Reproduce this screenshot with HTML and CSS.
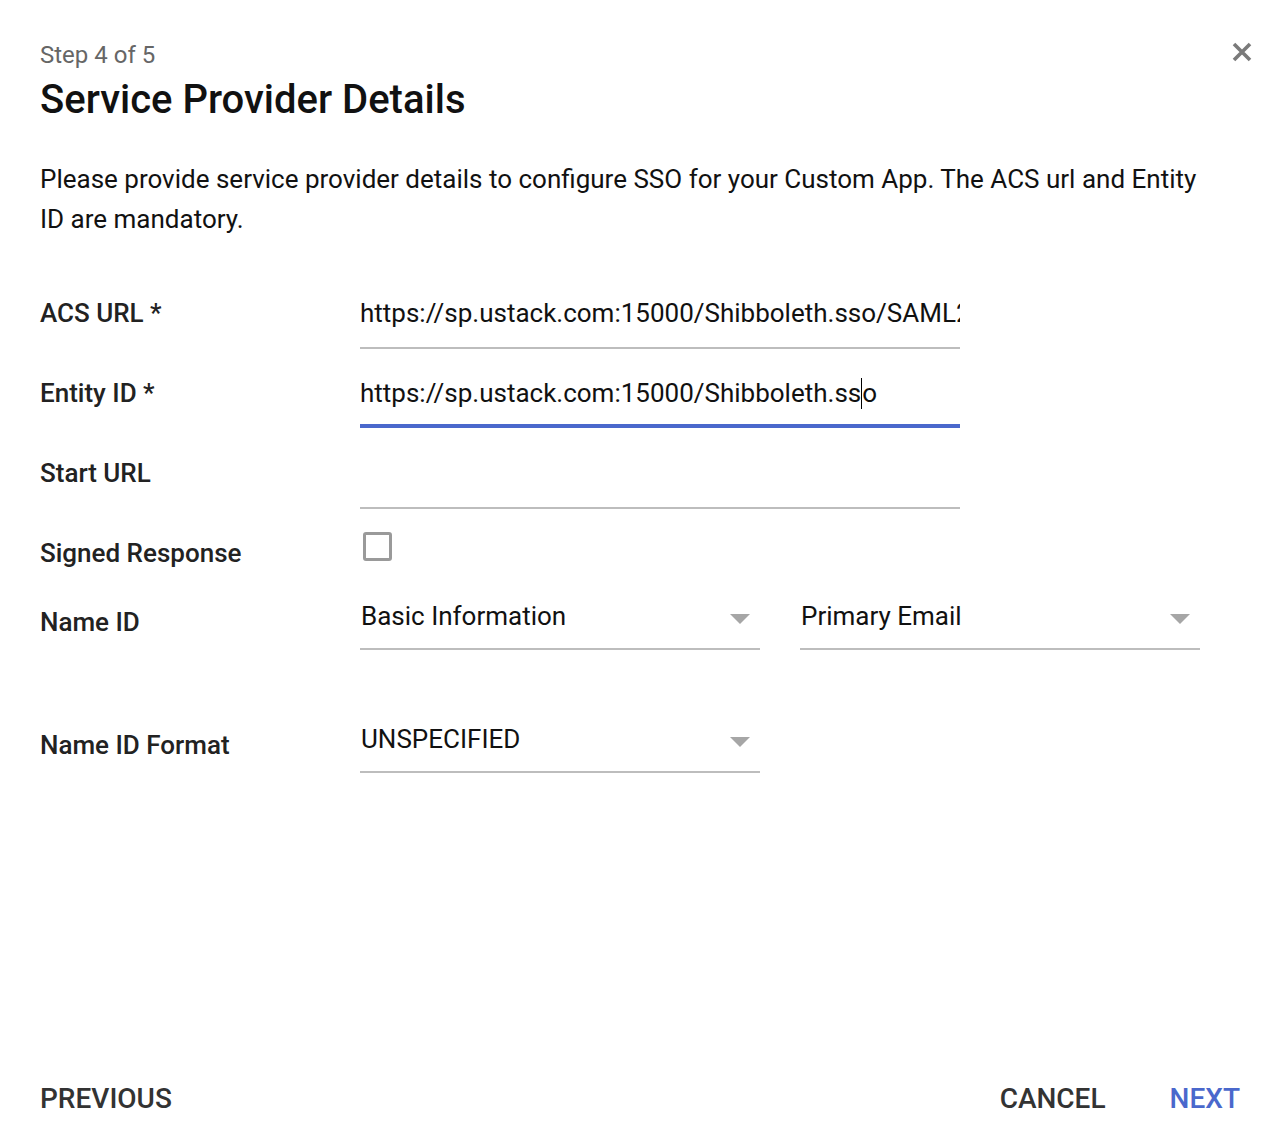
FILE: index.html
```html
<!DOCTYPE html>
<html>
<head>
<meta charset="utf-8">
<link rel="stylesheet" href="styles.css">
</head>
<body>
<div class="dialog">
  <button class="close" aria-label="Close">
    <svg width="22" height="22" viewBox="0 0 22 22"><path d="M3 3 L19 19 M19 3 L3 19" stroke="#7a7a7a" stroke-width="3.6" stroke-linecap="butt"/></svg>
  </button>
  <div class="step">Step 4 of 5</div>
  <h1 class="title">Service Provider Details</h1>
  <p class="desc">Please provide service provider details to configure SSO for your Custom App. The ACS url and Entity ID are mandatory.</p>

  <div class="form">
    <div class="row">
      <div class="label">ACS URL *</div>
      <div class="field"><span class="value">https://sp.ustack.com:15000/Shibboleth.sso/SAML2/POST</span></div>
    </div>
    <div class="row">
      <div class="label">Entity ID *</div>
      <div class="field focused"><span class="value">https://sp.ustack.com:15000/Shibboleth.ss<span class="caret"></span>o</span></div>
    </div>
    <div class="row">
      <div class="label">Start URL</div>
      <div class="field"><span class="value"></span></div>
    </div>
    <div class="row row-check">
      <div class="label">Signed Response</div>
      <div class="checkcell"><span class="checkbox"></span></div>
    </div>
    <div class="row row-select">
      <div class="label">Name ID</div>
      <div class="selects">
        <div class="select"><span>Basic Information</span><span class="arrow"></span></div>
        <div class="select"><span>Primary Email</span><span class="arrow"></span></div>
      </div>
    </div>
    <div class="row row-select2">
      <div class="label">Name ID Format</div>
      <div class="selects">
        <div class="select"><span>UNSPECIFIED</span><span class="arrow"></span></div>
      </div>
    </div>
  </div>

  <div class="footer">
    <button class="btn">PREVIOUS</button>
    <div class="right">
      <button class="btn">CANCEL</button>
      <button class="btn primary">NEXT</button>
    </div>
  </div>
</div>
</body>
</html>
```
FILE: styles.css
```css
* { box-sizing: border-box; }
html, body { margin: 0; padding: 0; background: #fff; }
body { font-family: Roboto, "Noto Sans", Arial, sans-serif; color: #111; }

.dialog {
  position: relative;
  height: 1134px;
  padding: 40px 40px 0 40px;
  display: flex;
  flex-direction: column;
}

.close {
  position: absolute;
  top: 41px;
  right: 25px;
  border: 0;
  background: none;
  padding: 0;
  width: 22px;
  height: 22px;
  cursor: pointer;
}
.close svg { display: block; }

.step {
  font-size: 24px;
  line-height: 30px;
  color: #666;
}
.title {
  margin: 8px 0 0 0;
  font-size: 40px;
  line-height: 44px;
  font-weight: 500;
  color: #111;
}
.desc {
  margin: 37px 0 0 0;
  max-width: 1165px;
  font-size: 26px;
  line-height: 40px;
  color: #111;
}

.form { margin-top: 34px; }

.row {
  display: grid;
  grid-template-columns: 320px 1fr;
  height: 80px;
}
.label {
  font-size: 26px;
  font-weight: 500;
  color: #222;
  line-height: 80px;
  white-space: nowrap;
}
.field {
  width: 600px;
  height: 76px;
  border-bottom: 2px solid #bdbdbd;
  padding-top: 6px;
  display: flex;
  align-items: center;
  overflow: hidden;
  white-space: nowrap;
}
.field .value { font-size: 26px; color: #111; }
.field.focused {
  height: 75px;
  border-bottom: 4px solid #4a68cc;
  padding-top: 9px;
}
.caret {
  display: inline-block;
  width: 1px;
  height: 31px;
  background: #000;
  vertical-align: -7px;
}

.row-check { height: 69px; }
.checkcell { padding-top: 19px; padding-left: 3px; }
.checkbox {
  display: block;
  width: 29px;
  height: 29px;
  border: 3px solid #9a9a9a;
  border-radius: 3px;
}

.row-select { height: 123px; }
.row-select2 { height: 80px; }
.selects { display: flex; gap: 40px; }
.select {
  width: 400px;
  height: 68px;
  border-bottom: 2px solid #bdbdbd;
  display: flex;
  align-items: center;
  justify-content: space-between;
  font-size: 26px;
  color: #111;
  padding: 2px 10px 0 1px;
  white-space: nowrap;
}
.arrow {
  width: 0;
  height: 0;
  border-left: 10.5px solid transparent;
  border-right: 10.5px solid transparent;
  border-top: 10px solid #a6a6a6;
  margin-top: 6px;
}

.footer {
  margin-top: auto;
  height: 55px;
  display: flex;
  justify-content: space-between;
  align-items: flex-start;
}
.right { display: flex; gap: 64px; margin-right: -2px; }
.btn {
  border: 0;
  background: none;
  padding: 0;
  font-family: Roboto, "Noto Sans", Arial, sans-serif;
  font-size: 28px;
  font-weight: 500;
  line-height: 40px;
  color: #333;
  cursor: pointer;
}
.btn.primary { color: #4a68cc; }
```
